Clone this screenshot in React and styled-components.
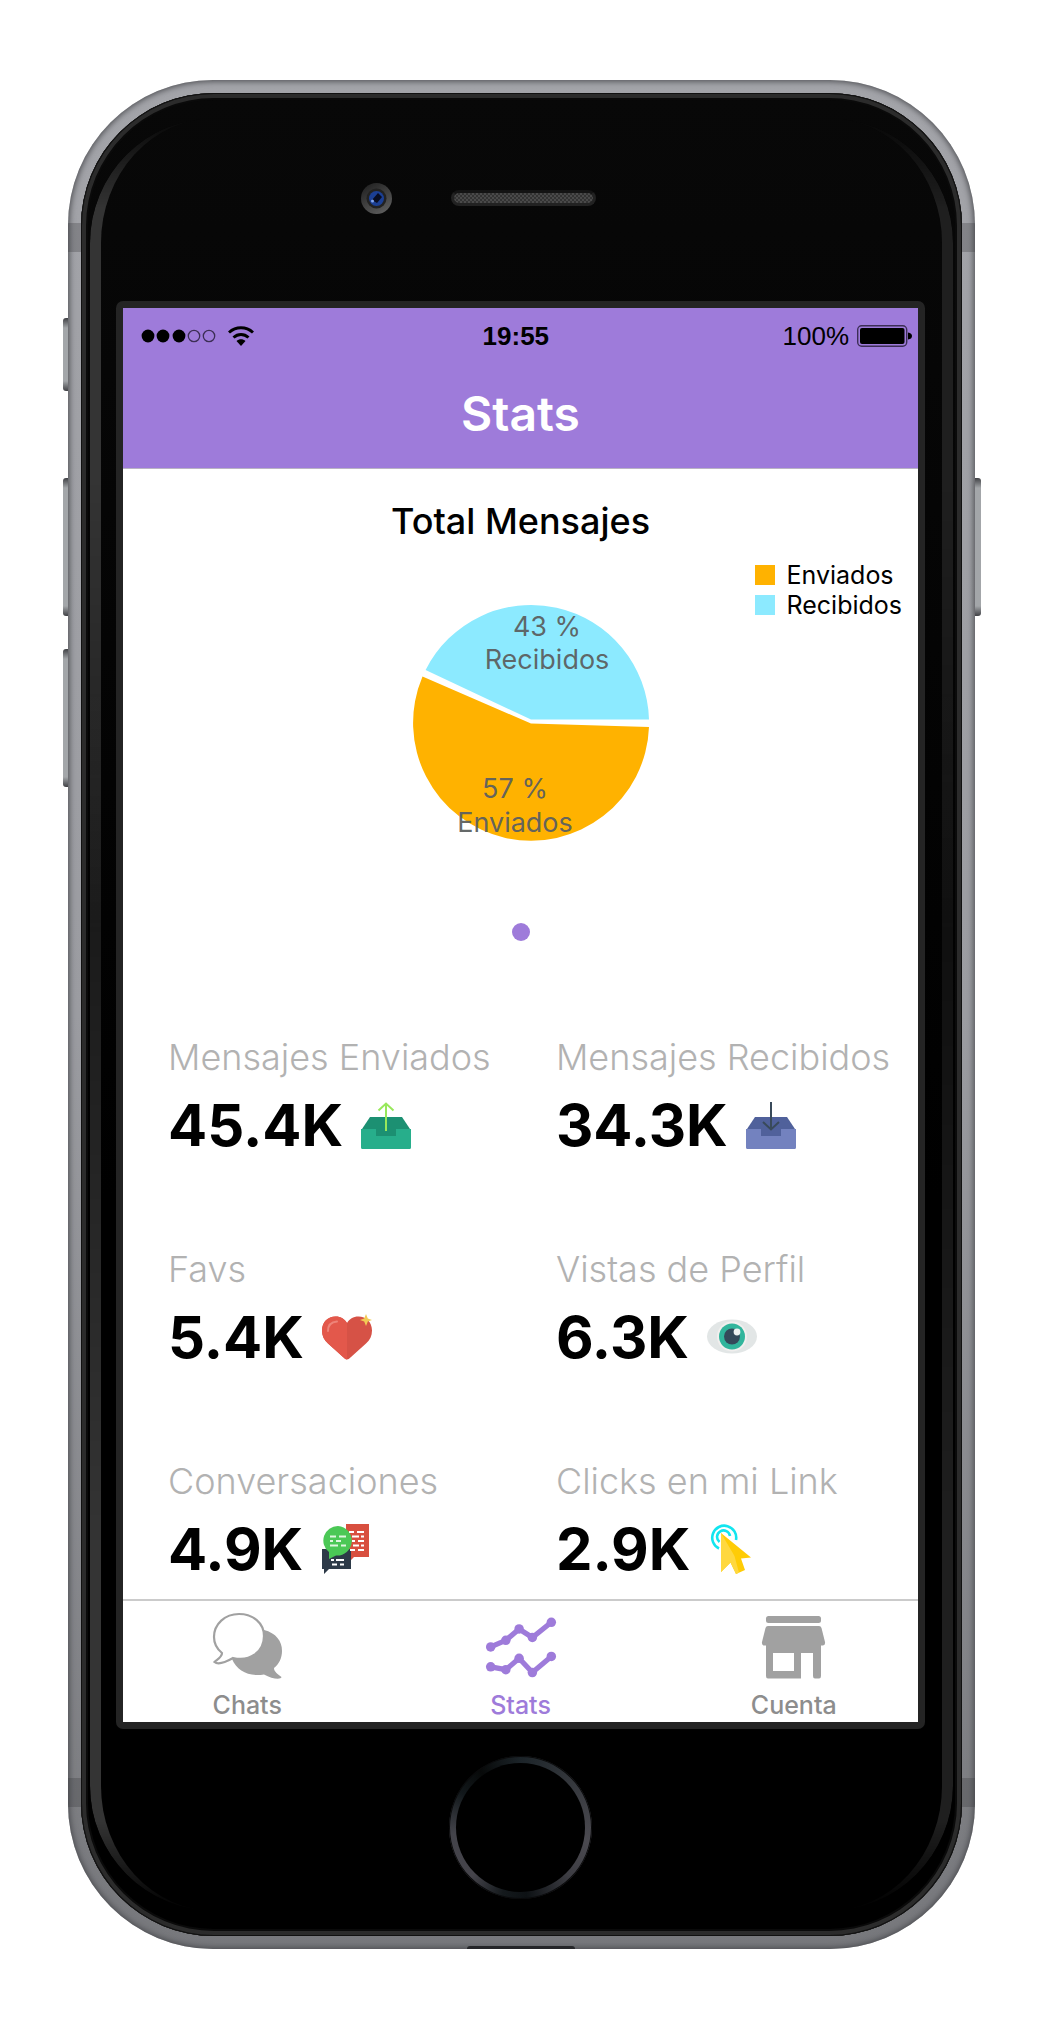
import React from "react";
import styled, { createGlobalStyle } from "styled-components";

const PURPLE = "#9e7bda";
const GREY = "#a1a1a1";

const GlobalStyle = createGlobalStyle`
  *, *::before, *::after { box-sizing: border-box; }
  body { margin: 0; background: #fff; }
  h1, h2, dl, dt, dd, ul { margin: 0; padding: 0; }
`;

const Page = styled.div`
  padding: 80px 70px 92px 68px;
  font-family: Inter, "Liberation Sans", sans-serif;
  color: #000;
`;

const Phone = styled.div`
  position: relative;
  padding: 13px;
  border-radius: 145px;
  background: linear-gradient(#a3a4a9, #9b9ca1 50%, #77787c);
  box-shadow: inset 0 0 6px 1px #46474b;

  &::after {
    content: "";
    position: absolute;
    left: 44%;
    bottom: 0;
    width: 108px;
    height: 3px;
    border-radius: 8px 8px 0 0;
    background: #26272a;
  }
`;

const Antenna = styled.span`
  position: absolute;
  left: 0;
  right: 0;
  ${(p) => (p.$bottom ? "bottom: 142px;" : "top: 143px;")}
  height: 29px;
  background: rgba(50, 50, 55, 0.28);
`;

const SideKey = styled.span`
  position: absolute;
  z-index: -1;
  top: ${(p) => p.$top}px;
  height: ${(p) => p.$height}px;
  width: 12px;
  ${(p) => (p.$side === "right" ? "right: -6px;" : "left: -5px;")}
  border-radius: 3px;
  background: linear-gradient(#404145, #a3a6a9 10px, #a3a6a9 calc(100% - 10px), #404145);
`;

const Glass = styled.div`
  position: relative;
  padding: 0 37px 0 35px;
  border-radius: 133px;
  background: linear-gradient(#080808, #000 60%);
  box-shadow: inset 0 0 0 1px #111, inset 0 0 0 5px #2b2b2b, inset 0 0 0 7px #0a0a0a;

  &::before {
    content: "";
    position: absolute;
    inset: 25px 9px;
    border: 0 solid transparent;
    border-left: 11px solid #343434;
    border-right: 11px solid #1f1f1f;
    border-radius: 125px;
    mask-image: linear-gradient(transparent, #000 90px, #000 20%, rgba(0, 0, 0, 0.5) 45%, #000 80%, #000 calc(100% - 90px), transparent);
    pointer-events: none;
  }
`;

const TopBezel = styled.div`
  display: grid;
  grid-template-columns: 1fr auto 1fr;
  column-gap: 59px;
  align-items: center;
  height: 208px;
  padding: 2px 0 0 6px;
`;

const Camera = styled.svg`
  justify-self: end;
  width: 31px;
  height: 31px;
`;

const Speaker = styled.div`
  width: 145px;
  height: 16px;
  border: 3px solid #222;
  border-top-color: #141414;
  border-radius: 8px;
  background: repeating-conic-gradient(#4a4a4a 0 25%, #333 0 50%) 0 0 / 4px 4px;
`;

const BottomBezel = styled.div`
  display: flex;
  justify-content: center;
  padding: 27px 0 37px;
`;

const HomeButton = styled.button`
  width: 143px;
  height: 143px;
  padding: 7px;
  border: 0;
  border-radius: 50%;
  background: conic-gradient(#1c2429, #33363b 45deg, #4b4a50 100deg, #3d3d43 135deg, #0d1114 175deg, #14191c 195deg, #45444b 225deg, #43434a 265deg, #12181b 300deg, #070909 325deg, #1c2429);
  box-shadow: inset 0 0 0 1px #0a0a0b;

  &::before {
    content: "";
    display: block;
    width: 100%;
    height: 100%;
    border-radius: 50%;
    background: #000;
  }
`;

const ScreenBezel = styled.div`
  padding: 7px;
  border-radius: 7px;
  background: #242424;
`;

const Screen = styled.div`
  display: flex;
  flex-direction: column;
  background: #fff;
`;

const Header = styled.header`
  background: ${PURPLE};
  border-bottom: 1px solid #b9b3c4;
`;

const StatusBar = styled.div`
  display: grid;
  grid-template-columns: 16fr auto 17fr;
  align-items: center;
  height: 56px;
  padding: 0 6px 0 18px;
  font: 26px/56px "Liberation Sans", Arial, sans-serif;
`;

const Signal = styled.div`
  display: flex;
  align-items: center;
  gap: 11px;
`;

const Clock = styled.strong`
  font-weight: 700;
`;

const Power = styled.div`
  display: flex;
  align-items: center;
  justify-content: flex-end;
  gap: 8px;
`;

const Title = styled.h1`
  height: 104px;
  color: #fff;
  font-size: 48px;
  line-height: 100px;
  font-weight: 600;
  text-align: center;
`;

const ChartSection = styled.section`
  display: grid;
  grid-template-columns: 1fr auto 1fr;
  padding: 31px 16px 0;
`;

const ChartTitle = styled.h2`
  grid-column: 1 / -1;
  font-size: 36px;
  line-height: 42px;
  font-weight: 500;
  text-align: center;
`;

const Pie = styled.svg`
  grid-column: 2;
  width: 240px;
  height: 240px;
  margin: 61px 0 0 20px;
`;

const PieLabel = styled.text`
  font-size: 27px;
  fill: #5b5f60;
  fill-opacity: 0.95;
  text-anchor: middle;
`;

const Legend = styled.ul`
  grid-column: 3;
  justify-self: end;
  margin-top: 18px;
  list-style: none;
  font-size: 25px;
  line-height: 30px;
`;

const LegendItem = styled.li`
  display: flex;
  align-items: center;
  gap: 12px;

  &::before {
    content: "";
    width: 20px;
    height: 20px;
    background: ${(p) => p.$color};
  }
`;

const Pager = styled.div`
  display: flex;
  justify-content: center;
  padding: 80px 0 86px;
`;

const PagerDot = styled.button`
  width: 18px;
  height: 18px;
  padding: 0;
  border: 0;
  border-radius: 50%;
  background: ${PURPLE};
`;

const StatGrid = styled.dl`
  display: grid;
  grid-template-columns: 15fr 14fr;
  padding-left: 45px;
  row-gap: 76px;
`;

const Stat = styled.div`
  white-space: nowrap;
`;

const StatLabel = styled.dt`
  color: #b2b2b2;
  font-size: 36px;
  line-height: 60px;
  font-weight: 300;
`;

const StatValue = styled.dd`
  display: flex;
  align-items: center;
  gap: 18px;
  font-size: 58px;
  line-height: 76px;
  font-weight: 700;
`;

const StatIcon = styled.svg`
  width: 50px;
  height: 50px;
`;

const TabBar = styled.nav`
  display: grid;
  grid-template-columns: 5fr 6fr 5fr;
  margin-top: 12px;
  border-top: 2px solid #cbcbcb;
`;

const Tab = styled.button`
  display: flex;
  flex-direction: column;
  align-items: center;
  gap: 8px;
  padding: 10px 0 1px;
  border: 0;
  background: none;
  color: ${(p) => (p.$active ? PURPLE : "#8d8d8d")};
  font: 500 25px/32px Inter, "Liberation Sans", sans-serif;
`;

const TabIcon = styled.svg`
  width: 72px;
  height: 70px;
`;

function TrayIcon({ front, back, arrow, up }) {
  return (
    <StatIcon viewBox="0 0 50 50" aria-hidden="true">
      <path d="M9 17H41L49 29V38H1V29Z" fill={back} />
      <path d="M1 29H15V36H35V29H50V47.500Q50 49 48.500 49H1.500Q0 49 0 47.500V29Z" fill={front} />
      <path
        d={up ? "M25 31V3M17.500 10.500 25 3.500 32.500 10.500" : "M25 2V29M17 22 25 29.500 33 22"}
        fill="none"
        stroke={arrow}
        strokeWidth="2"
      />
    </StatIcon>
  );
}

function HeartIcon() {
  return (
    <StatIcon viewBox="0 0 50 50" aria-hidden="true">
      <path d="M25 47.500Q23.500 47.500 21 45L6 31.500C2 28 0 24 0 18.500C0 10 6 4.500 13.500 4.500C19 4.500 22.500 7 25 11C27.500 7 31 4.500 36.500 4.500C44 4.500 50 10 50 18.500C50 24 48 28 44 31.500L29 45Q26.500 47.500 25 47.500Z" fill="#d65246" />
      <path d="M25 47.500Q23.500 47.500 21 45L6 31.500C2 28 0 24 0 18.500C0 10 6 4.500 13.500 4.500C19 4.500 22.500 7 25 11Z" fill="#e3584b" />
      <path d="M6 19C6 13 9 10 15 9.500" fill="none" stroke="#ee8479" strokeWidth="2" strokeLinecap="round" />
      <path d="M44 2 45.800 6.500 50 8 45.800 9.500 44 14 42.200 9.500 38 8 42.200 6.500Z" fill="#f2cb55" />
    </StatIcon>
  );
}

function EyeIcon() {
  return (
    <StatIcon viewBox="0 0 50 50" aria-hidden="true">
      <ellipse cx="25" cy="24.500" rx="25" ry="17" fill="#e2e6e6" />
      <circle cx="25" cy="24.500" r="15" fill="#f1efee" />
      <circle cx="25" cy="24.500" r="13" fill="#31b59c" />
      <circle cx="25" cy="24.500" r="8" fill="#34495a" />
      <circle cx="30" cy="20" r="3.400" fill="#eef1f1" />
    </StatIcon>
  );
}

function TalkIcon() {
  return (
    <StatIcon viewBox="0 0 50 50" aria-hidden="true">
      <path d="M25 0H48V33H33L28 38V33H25Z" fill="#d84f3f" />
      <path d="M1 25H30V45H8L3 50V45H1Z" fill="#2d3a48" />
      <path d="M17 2A14.500 14.500 0 1 1 15 31.500L8 35V28A14.500 14.500 0 0 1 17 2Z" fill="#4bc856" />
      <path
        d="M28 8H33M36 8H43M31 12.500H38M40 12.500H43M31 17H34M37 17H43M32 21.500H38M40 21.500H43M29 26H34M37 26H43"
        stroke="#fff"
        strokeWidth="2.200"
      />
      <path d="M9 12.500H15M18 12.500H25M9 17H12M15 17H20M9 21.500H17M20 21.500H25" stroke="#dff6df" strokeWidth="2.200" />
      <path d="M10 36H13M15 36H23M11 40.500H16M19 40.500H23" stroke="#fff" strokeWidth="2.200" />
    </StatIcon>
  );
}

function ClickIcon() {
  return (
    <StatIcon viewBox="0 0 50 50" aria-hidden="true">
      <path d="M11 24.500A12 12 0 1 1 28 16M11.500 18A6.500 6.500 0 1 1 22 12" fill="none" stroke="#12e5ef" strokeWidth="2.600" />
      <path d="M13 9 43 33.500 33 34.500 37 46 28 50 22.500 38.500 13 48Z" fill="#ffcc06" />
      <path d="M13 9 26.500 32 31 48.700 28 50 22.500 38.500 13 48Z" fill="#ffd83f" />
    </StatIcon>
  );
}

function ChatsIcon() {
  return (
    <TabIcon viewBox="0 0 72 70" aria-hidden="true">
      <path d="M53 19C65 22 71 30 71 40C71 47 68 53 63 57C63 61 67 63 70.500 66C70 69 61 68 53 63.500C38 66 26 60 21 48Z" fill={GREY} />
      <path
        d="M28 3C14 3 3 13 3 26C3 34 6 38 11 42C11 46 7 48 3.500 51C7 54 15 51 22 47C39 51 53 41 53 25C53 12 42 3 28 3Z"
        fill="#fff"
        stroke={GREY}
        strokeWidth="2.200"
      />
    </TabIcon>
  );
}

function StatsIcon() {
  const top = [[6, 36], [22, 29], [36, 17], [50, 26], [70, 10]];
  const low = [[6, 57], [22, 60], [36, 48], [50, 63], [70, 46]];
  return (
    <TabIcon viewBox="0 0 76 70" aria-hidden="true">
      {[top, low].map((line, i) => (
        <g key={i} fill={PURPLE}>
          <polyline points={line.join(" ")} fill="none" stroke={PURPLE} strokeWidth="5.500" />
          {line.map(([x, y]) => (
            <circle key={x} cx={x} cy={y} r="5" />
          ))}
        </g>
      ))}
    </TabIcon>
  );
}

function StoreIcon() {
  return (
    <TabIcon viewBox="0 0 72 70" aria-hidden="true" fill={GREY}>
      <rect x="8" y="5" width="55" height="7" rx="2.500" />
      <path d="M10 15H61Q63 15 63.500 17L67 31Q67.500 34.500 65 34.500H63V65Q63 67.500 61 67.500H57Q55 67.500 55 65V42H43V67.500H10Q8 67.500 8 65V34.500H6Q3.500 34.500 4 31L7.500 17Q8 15 10 15ZM15 42V60H36V42Z" />
    </TabIcon>
  );
}

const STATS = [
  ["Mensajes Enviados", "45.4K", <TrayIcon front="#27ae8b" back="#1c9072" arrow="#98e85b" up />],
  ["Mensajes Recibidos", "34.3K", <TrayIcon front="#7382bf" back="#50619b" arrow="#394a5a" />],
  ["Favs", "5.4K", <HeartIcon />],
  ["Vistas de Perfil", "6.3K", <EyeIcon />],
  ["Conversaciones", "4.9K", <TalkIcon />],
  ["Clicks en mi Link", "2.9K", <ClickIcon />],
];

export default function App() {
  return (
    <Page>
      <GlobalStyle />
      <Phone>
        <SideKey $top={238} $height={73} />
        <SideKey $top={398} $height={138} />
        <SideKey $top={569} $height={138} />
        <SideKey $side="right" $top={398} $height={138} />
        <Antenna />
        <Antenna $bottom />
        <Glass>
          <TopBezel>
            <Camera viewBox="0 0 31 31" aria-hidden="true">
              <defs>
                <linearGradient id="rim" x1="0" y1="0" x2="0.600" y2="1">
                  <stop offset="0" stopColor="#1c1c1c" />
                  <stop offset="1" stopColor="#5a5a5a" />
                </linearGradient>
              </defs>
              <circle cx="15.500" cy="15.500" r="15.500" fill="url(#rim)" />
              <circle cx="15.500" cy="15.500" r="10" fill="#222" />
              <circle cx="15.500" cy="15.500" r="7.500" fill="#1b3f94" />
              <path d="M11 17 17 10 21 14 16 20Z" fill="#080d22" />
              <circle cx="11.500" cy="18" r="1.500" fill="#86a8ee" />
            </Camera>
            <Speaker />
          </TopBezel>
          <ScreenBezel>
            <Screen>
              <Header>
                <StatusBar>
                  <Signal>
                    <svg width="76" height="14" viewBox="0 0 76 14" aria-hidden="true">
                      {[7, 22, 38].map((x) => (
                        <circle key={x} cx={x} cy="7" r="6.400" />
                      ))}
                      {[53, 68].map((x) => (
                        <circle key={x} cx={x} cy="7" r="5.700" fill="none" stroke="#3c2e55" strokeWidth="1.300" />
                      ))}
                    </svg>
                    <svg width="26" height="20" viewBox="0 0 26 20" aria-hidden="true">
                      <path d="M1 6.500C8 .300 18 .300 25 6.500M5.500 11.500C10 7.500 16 7.500 20.500 11.500" fill="none" stroke="#000" strokeWidth="3" />
                      <path d="M8.500 15C11 12.800 15 12.800 17.500 15L13 20Z" />
                    </svg>
                  </Signal>
                  <Clock>19:55</Clock>
                  <Power>
                    100%
                    <svg width="55" height="22" viewBox="0 0 55 22" aria-hidden="true">
                      <rect x=".700" y=".700" width="49" height="20.600" rx="4" fill="none" stroke="#3c2e55" strokeWidth="1.400" />
                      <rect x="3" y="3" width="44.500" height="16" rx="2" />
                      <path d="M51 7.500Q55 8 55 11T51 14.500Z" />
                    </svg>
                  </Power>
                </StatusBar>
                <Title>Stats</Title>
              </Header>

              <ChartSection>
                <ChartTitle>Total Mensajes</ChartTitle>
                <Pie viewBox="0 0 240 240" role="img" aria-label="Recibidos 43 %, Enviados 57 %">
                  <path d="M120 116.500H238A118 118 0 0 0 14.600 67Z" fill="#8ceaff" />
                  <path d="M120 120.500 238 124A118 118 0 1 1 11.500 73.500Z" fill="#ffb200" />
                  <PieLabel x="136" y="33">43 %</PieLabel>
                  <PieLabel x="136" y="66">Recibidos</PieLabel>
                  <PieLabel x="104" y="195">57 %</PieLabel>
                  <PieLabel x="104" y="229">Enviados</PieLabel>
                </Pie>
                <Legend>
                  <LegendItem $color="#ffb200">Enviados</LegendItem>
                  <LegendItem $color="#8ceaff">Recibidos</LegendItem>
                </Legend>
              </ChartSection>
              <Pager>
                <PagerDot aria-label="Total Mensajes" />
              </Pager>

              <StatGrid>
                {STATS.map(([label, value, icon]) => (
                  <Stat key={label}>
                    <StatLabel>{label}</StatLabel>
                    <StatValue>
                      {value}
                      {icon}
                    </StatValue>
                  </Stat>
                ))}
              </StatGrid>

              <TabBar>
                <Tab>
                  <ChatsIcon />
                  Chats
                </Tab>
                <Tab $active aria-current="page">
                  <StatsIcon />
                  Stats
                </Tab>
                <Tab>
                  <StoreIcon />
                  Cuenta
                </Tab>
              </TabBar>
            </Screen>
          </ScreenBezel>
          <BottomBezel>
            <HomeButton aria-label="Inicio" />
          </BottomBezel>
        </Glass>
      </Phone>
    </Page>
  );
}
